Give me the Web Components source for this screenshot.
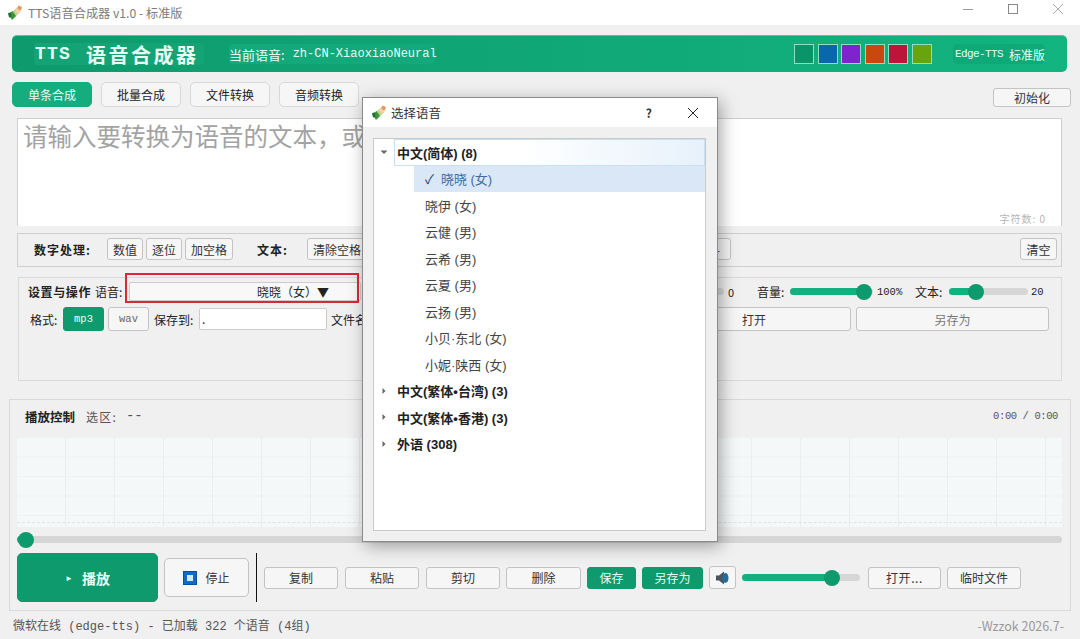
<!DOCTYPE html>
<html lang="zh">
<head>
<meta charset="utf-8">
<title>TTS语音合成器</title>
<style>
  html, body { margin: 0; height: 100%; }
  body {
    width: 1080px; height: 639px; overflow: hidden; position: relative;
    background: #f0f0f0; color: #222;
    font: 12px "Noto Sans CJK SC", "Liberation Sans", sans-serif;
  }
  div { box-sizing: border-box; }
  .row { display: flex; align-items: center; }
  .t { white-space: nowrap; flex: none; }
  .muted { color: #555; }
  .mono { font-family: "Liberation Mono", "Noto Sans CJK SC", monospace; }
</style>
</head>
<body>

<template id="icon-tpl">
  <style>:host { display: inline-block; width: 16px; height: 16px; line-height: 0; }</style>
  <svg width="16" height="16" viewBox="0 0 16 16">
    <path d="M2 9 L6 14 L13.500 7 L9.500 3 Z" fill="#c3d58c"/>
    <path d="M1.500 9.500 L5 15 L9 11 L5.500 6 Z" fill="#3f9440"/>
    <path d="M7.500 5 L11 9 L13.500 6.500 L10.500 3 Z" fill="#f0d2ac"/>
    <path d="M10 3 L11.500 .5 L15 2 L14 5.500 L12.500 5.500 Z" fill="#e8995a"/>
    <path d="M1 8 L4 7.500 L4.500 12 L2 12.500 Z" fill="#256f2c"/>
  </svg>
</template>

<script>
const css = `
  :host, * { box-sizing: border-box; }
`

function shadow(el, html) {
  const root = el.attachShadow({ mode: 'open' })
  root.innerHTML = `<style>${css}</style>` + html
  return root
}

class TtsIcon extends HTMLElement {
  constructor() {
    super()
    const root = this.attachShadow({ mode: 'open' })
    root.appendChild(document.getElementById('icon-tpl').content.cloneNode(true))
  }
}

class TtsTitlebar extends HTMLElement {
  constructor() {
    super()
    shadow(this, `
      <style>
        :host { display: flex; align-items: center; height: 25px; background: #fff; padding-left: 7px; color: #7b7b7b; font-size: 12.2px; }
        span { margin-left: 5px; }
        .ctl { margin-left: auto; display: flex; }
        .ctl svg { width: 45px; height: 25px; display: block; }
      </style>
      <tts-icon></tts-icon><span>TTS语音合成器 v1.0 - 标准版</span>
      <div class="ctl">
        <svg viewBox="0 0 45 25"><path d="M18 9.500h10" stroke="#999" fill="none"/></svg>
        <svg viewBox="0 0 45 25"><rect x="18.500" y="4.500" width="9" height="9" stroke="#888" fill="none"/></svg>
        <svg viewBox="0 0 45 25"><path d="M18 4l10 10M28 4l-10 10" stroke="#aaa" fill="none"/></svg>
      </div>`)
  }
}

class TtsHeader extends HTMLElement {
  constructor() {
    super()
    shadow(this, `
      <style>
        :host { display: flex; align-items: center; height: 37px; margin: 10px 13px 0 12px; padding-left: 22px; border-radius: 5px; color: #e6fff4;
          background: linear-gradient(90deg, #0e9a6c, #12b47f); border-top: 1px solid #4dc9a0; }
        .logo { display: flex; align-items: center; width: 170px; height: 22px; padding-left: 1px; border-radius: 4px; background: #13a375; white-space: nowrap; }
        .logo span { font: bold 18px "Liberation Mono", monospace; letter-spacing: 1.200px; }
        .logo b { margin-left: 15px; font: bold 20px "Noto Sans CJK SC", sans-serif; letter-spacing: 2.500px; }
        .voice { display: flex; align-items: center; margin-left: 25px; height: 20px; width: 206px; font-size: 13px; white-space: nowrap; background: #13a97a; border-radius: 4px; }
        .voice code { font: 12px "Liberation Mono", monospace; margin-left: 8px; }
        .swatches { margin-left: auto; display: flex; gap: 3.600px; }
        i { display: block; width: 20px; height: 20px; border: 1px solid #8ce0c0; }
        .ed { display: flex; align-items: center; margin: 0 22px 0 21px; padding-left: 2px; width: 92px; height: 20px; border-radius: 5px; background: #0fa877; font-size: 12px; white-space: nowrap; }
        .ed code { font: 11px "Liberation Mono", monospace; letter-spacing: -.6px; margin-right: 6px; }
      </style>
      <div class="logo"><span>TTS</span><b>语音合成器</b></div>
      <div class="voice">当前语音:<code>zh-CN-XiaoxiaoNeural</code></div>
      <div class="swatches">
        <i style="background:#0b9467"></i><i style="background:#0a67ab"></i><i style="background:#8122cf"></i>
        <i style="background:#c9480f"></i><i style="background:#bd1439"></i><i style="background:#69a30e"></i>
      </div>
      <div class="ed"><code>Edge-TTS</code>标准版</div>`)
  }
}

class TtsButton extends HTMLElement {
  constructor() {
    super()
    shadow(this, `
      <style>
        :host { display: inline-flex; align-items: center; justify-content: center; flex: none; white-space: nowrap;
          height: 22px; border: 1px solid #c3c3c3; border-radius: 3px; background: #f6f6f6; color: #333; font-size: 12px; }
        :host([primary]) { background: #0e9a6c; border-color: #0e9a6c; color: #e8fff5; }
        :host([tab]) { height: 25px; width: 80px; border-radius: 5px; border-color: #d8d8d8; color: #222; }
        :host([tab][primary]) { background: #15ad7d; border-color: #15ad7d; color: #e8fff5; }
      </style>
      <slot></slot>`)
  }
  connectedCallback() {
    if (this.hasAttribute('w')) this.style.width = this.getAttribute('w') + 'px'
    if (this.hasAttribute('h')) this.style.height = this.getAttribute('h') + 'px'
  }
}

class TtsSlider extends HTMLElement {
  constructor() {
    super()
    shadow(this, `
      <style>
        :host { display: block; position: relative; flex: none; height: 16px; }
        .track { position: absolute; left: 0; right: 0; top: 4px; height: 7px; border-radius: 4px; background: #d6d6d6; overflow: hidden; }
        .fill { height: 100%; background: #13b07f; }
        .thumb { position: absolute; top: 0; width: 16px; height: 16px; border-radius: 50%; background: #0e9a6c; }
      </style>
      <div class="track"><div class="fill"></div></div><div class="thumb"></div>`)
  }
  connectedCallback() {
    const w = +this.getAttribute('w')
    const at = +this.getAttribute('at')
    this.style.width = w + 'px'
    this.shadowRoot.querySelector('.fill').style.width = at + 'px'
    this.shadowRoot.querySelector('.thumb').style.left = (at - 8) + 'px'
  }
}

class TtsPanel extends HTMLElement {
  constructor() {
    super()
    shadow(this, `
      <style>
        :host { display: block; border: 1px solid #d9d9d9; }
      </style>
      <slot></slot>`)
  }
}

class TtsWave extends HTMLElement {
  constructor() {
    super()
    shadow(this, `
      <style>
        :host { display: block; position: relative; height: 89px; background-color: #f5f8f9;
          background-image: linear-gradient(90deg, #e9eef0 1px, transparent 1px), linear-gradient(#edf1f3 1px, transparent 1px);
          background-size: 49px 100%, 100% 19.500px; background-position: -1px 0, 0 -1px; }
        div { position: absolute; left: 0; right: 0; top: 84px; border-top: 1px dashed #dde3e6; }
      </style>
      <div></div>`)
  }
}

class VoiceGroup extends HTMLElement {
  constructor() {
    super()
    shadow(this, `
      <style>
        :host { display: flex; align-items: center; height: 26.500px; padding-left: 6px; font: bold 13px "Liberation Sans", "Noto Sans CJK SC", sans-serif; color: #222; white-space: nowrap; }
        svg { width: 8px; height: 8px; margin-right: 6px; flex: none; }
        .lab { flex: 1; height: 100%; display: flex; align-items: center; padding-left: 3px; }
        :host([open]) .lab { border: 1px solid #c9dff2; background: linear-gradient(90deg, #fff, #fff 40%, #e7f1fb); padding-left: 2px; }
      </style>
      <svg viewBox="0 0 8 8"><path d="M2.500 1v6l3-3z" fill="#666"/></svg>
      <div class="lab"><slot></slot></div>`)
  }
  connectedCallback() {
    if (this.hasAttribute('open')) this.shadowRoot.querySelector('path').setAttribute('d', 'M.5 2.500h7l-3.500 3.500z')
  }
}

class VoiceItem extends HTMLElement {
  constructor() {
    super()
    shadow(this, `
      <style>
        :host { display: flex; align-items: center; height: 26.500px; margin-left: 40px; padding-left: 11px; font: 13px "Liberation Sans", "Noto Sans CJK SC", sans-serif; color: #444; white-space: nowrap; }
        :host([selected]) { background: #d9e7f6; color: #3f6aa3; }
        .check { margin-right: 7px; color: #22466f; }
      </style>
      <slot></slot>`)
  }
  connectedCallback() {
    if (this.hasAttribute('selected')) {
      const s = document.createElement('span')
      s.className = 'check'
      s.textContent = '✓'
      this.shadowRoot.insertBefore(s, this.shadowRoot.querySelector('slot'))
    }
  }
}

class VoiceDialog extends HTMLElement {
  constructor() {
    super()
    shadow(this, `
      <style>
        :host { position: absolute; left: 362px; top: 97px; width: 356px; height: 445px; display: flex; flex-direction: column;
          background: #f0f0f0; border: 1px solid #8b8b8b; box-shadow: 3px 4px 16px rgba(0,0,0,.35); color: #333; }
        .bar { height: 29px; flex: none; background: #fff; display: flex; align-items: center; padding-left: 8px; font-size: 12.500px; }
        .bar span { margin-left: 4px; }
        .q { margin-left: auto; margin-right: 35px; font-weight: bold; font-size: 12px; }
        .bar svg { width: 12px; height: 12px; margin-right: 18px; }
        .tree { flex: 1; margin: 11px 11px 10px 10px; background: #fff; border: 1px solid #c9c9c9; }
      </style>
      <div class="bar"><tts-icon></tts-icon><span>选择语音</span><b class="q">?</b>
        <svg viewBox="0 0 12 12"><path d="M1 1l10 10M11 1L1 11" stroke="#222" fill="none"/></svg></div>
      <div class="tree"><slot></slot></div>`)
  }
}

customElements.define('tts-icon', TtsIcon)
customElements.define('tts-titlebar', TtsTitlebar)
customElements.define('tts-header', TtsHeader)
customElements.define('tts-button', TtsButton)
customElements.define('tts-slider', TtsSlider)
customElements.define('tts-panel', TtsPanel)
customElements.define('tts-wave', TtsWave)
customElements.define('voice-group', VoiceGroup)
customElements.define('voice-item', VoiceItem)
customElements.define('voice-dialog', VoiceDialog)
</script>

<tts-titlebar></tts-titlebar>
<tts-header></tts-header>

<div class="row" style="margin:10px 9px 0 12px;gap:9px;height:25px">
  <tts-button tab primary>单条合成</tts-button>
  <tts-button tab>批量合成</tts-button>
  <tts-button tab>文件转换</tts-button>
  <tts-button tab>音频转换</tts-button>
  <tts-button w="78" h="19" style="margin-left:auto;margin-top:6px">初始化</tts-button>
</div>

<div style="margin:11px 18px 0 17px;height:108px;background:#fff;border:1px solid #cfcfcf;border-bottom:0;position:relative;padding:0 5px;font-size:24.500px;color:#a3a3a3;line-height:34px;white-space:nowrap;overflow:hidden">请输入要转换为语音的文本，或<span style="position:absolute;right:15px;bottom:0;font-size:10px;line-height:14px;letter-spacing:1px;color:#b5b5b5">字符数: 0</span></div>

<tts-panel style="margin:7px 18px 0 17px;height:34px;border-color:#cfcfcf">
  <div class="row" style="height:30px;padding:0 4px 0 16px">
    <b class="t" style="width:73px;letter-spacing:1px">数字处理:</b>
    <tts-button w="36">数值</tts-button>
    <tts-button w="36" style="margin-left:3px">逐位</tts-button>
    <tts-button w="48" style="margin-left:3px">加空格</tts-button>
    <b class="t" style="margin-left:24px;width:50px;letter-spacing:1px">文本:</b>
    <tts-button w="60">清除空格</tts-button>
    <tts-button w="360" style="margin-left:4px;justify-content:flex-end;padding-right:10px">-</tts-button>
    <tts-button w="37" style="margin-left:auto">清空</tts-button>
  </div>
</tts-panel>

<tts-panel style="margin:10px 18px 0 18px;height:104px">
  <div class="row" style="height:27px;padding:0 0 0 9px">
    <b class="t" style="width:67px;letter-spacing:.6px">设置与操作</b>
    <span class="t" style="width:34px">语音:</span>
    <div class="t" style="width:232px;height:19px;background:#f8f8f8;border:1px solid #ccc;border-radius:2px;padding-left:127px;line-height:17px">晓晓（女）▼</div>
    <tts-slider w="358" at="180" style="margin-left:5px"></tts-slider>
    <span class="t" style="margin-left:4px;width:29px;font-size:11px">0</span>
    <span class="t" style="width:33px">音量:</span>
    <tts-slider w="83" at="74"></tts-slider>
    <span class="t mono" style="width:38px;margin-left:4px;font-size:10.500px">100%</span>
    <span class="t" style="width:34px">文本:</span>
    <tts-slider w="79" at="27"></tts-slider>
    <span class="t mono" style="margin-left:3px;font-size:10.500px">20</span>
  </div>
  <div class="row" style="height:24px;margin-top:2px;padding-left:11px">
    <span class="t" style="width:33px">格式:</span>
    <tts-button primary w="41" h="24" class="mono" style="font-size:10.500px">mp3</tts-button>
    <tts-button w="41" h="24" class="mono" style="margin-left:4px;font-size:10.500px;color:#666">wav</tts-button>
    <span class="t" style="margin-left:5px;width:45px">保存到:</span>
    <div style="width:128px;height:22px;background:#fff;border:1px solid #ccc;border-radius:2px;padding-left:2px;line-height:20px;flex:none">.</div>
    <span class="t" style="margin-left:4px;width:50px">文件名:</span>
    <tts-button w="194" h="24" style="margin-left:276px">打开</tts-button>
    <tts-button w="193" h="24" style="margin-left:5px;color:#777">另存为</tts-button>
  </div>
</tts-panel>

<tts-panel style="margin:18px 9px 0 9px;height:212px;padding:0 8px 0 7px">
  <div class="row" style="height:38px;padding:0 4px 6px 8px">
    <b class="t" style="width:61px;font-size:12.500px">播放控制</b>
    <span class="t muted" style="letter-spacing:1.200px">选区:</span>
    <span class="t muted mono" style="margin-left:9px;font-size:14px">--</span>
    <span class="t muted mono" style="margin-left:auto;font-size:10.500px;letter-spacing:-.4px">0:00 / 0:00</span>
  </div>
  <tts-wave></tts-wave>
  <tts-slider w="1045" at="9" style="margin-top:5px"></tts-slider>
  <div class="row" style="height:49px;margin-top:5px">
    <tts-button primary w="141" h="49" style="border-radius:5px;font-size:14px;font-weight:bold"><span style="font-size:8px;margin-right:9px">►</span>播放</tts-button>
    <tts-button w="85" h="39" style="margin-left:6px;border-radius:5px"><svg width="14" height="14" viewBox="0 0 14 14" style="margin-right:8px"><rect width="14" height="14" fill="#0b4f94"/><rect x="1" y="1" width="12" height="12" fill="#0a6ec8"/><rect x="4" y="4" width="6" height="6" fill="#d4e9fc"/></svg>停止</tts-button>
    <div style="width:1px;height:49px;background:#111;margin:0 7px"></div>
    <tts-button w="74">复制</tts-button>
    <tts-button w="74" style="margin-left:7px">粘贴</tts-button>
    <tts-button w="74" style="margin-left:7px">剪切</tts-button>
    <tts-button w="75" style="margin-left:6px">删除</tts-button>
    <tts-button primary w="49" style="margin-left:6px">保存</tts-button>
    <tts-button primary w="61" style="margin-left:6px">另存为</tts-button>
    <tts-button w="27" h="23" style="margin-left:6px"><svg width="16" height="16" viewBox="0 0 16 16"><path d="M1 5.500h3l5-4v13l-5-4H1z" fill="#4d5560"/><ellipse cx="10.500" cy="8" rx="3" ry="5" fill="#1f6f9a"/></svg></tts-button>
    <tts-slider w="118" at="90" style="margin-left:6px"></tts-slider>
    <tts-button w="73" style="margin-left:8px;letter-spacing:.6px">打开...</tts-button>
    <tts-button w="74" style="margin-left:6px">临时文件</tts-button>
  </div>
</tts-panel>

<div class="row muted" style="height:28px;padding:0 16px 0 13px">
  <span class="t mono" style="font-size:12px">微软在线 (edge-tts) - 已加载 322 个语音 (4组)</span>
  <span class="t" style="margin-left:auto;color:#999;font-size:12.500px">-Wzzok 2026.7-</span>
</div>

<!-- the red mark was drawn over the screenshot -->
<div style="position:absolute;left:125px;top:273px;width:234px;height:30px;border:2px solid #d9283a"></div>

<voice-dialog>
  <voice-group open>中文(简体) (8)</voice-group>
  <voice-item selected>晓晓 (女)</voice-item>
  <voice-item>晓伊 (女)</voice-item>
  <voice-item>云健 (男)</voice-item>
  <voice-item>云希 (男)</voice-item>
  <voice-item>云夏 (男)</voice-item>
  <voice-item>云扬 (男)</voice-item>
  <voice-item>小贝·东北 (女)</voice-item>
  <voice-item>小妮·陕西 (女)</voice-item>
  <voice-group>中文(繁体•台湾) (3)</voice-group>
  <voice-group>中文(繁体•香港) (3)</voice-group>
  <voice-group>外语 (308)</voice-group>
</voice-dialog>

</body>
</html>
